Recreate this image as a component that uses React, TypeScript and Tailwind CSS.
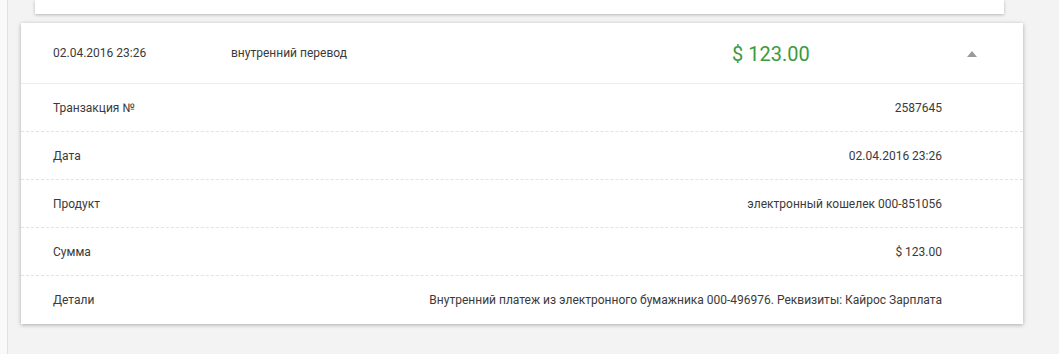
import React from "react";

const rows: [string, string][] = [
  ["Транзакция №", "2587645"],
  ["Дата", "02.04.2016 23:26"],
  ["Продукт", "электронный кошелек 000-851056"],
  ["Сумма", "$ 123.00"],
  ["Детали", "Внутренний платеж из электронного бумажника 000-496976. Реквизиты: Кайрос Зарплата"],
];

export default function App() {
  return (
    <div
      className="w-[1059px] h-[354px] bg-[#f3f3f3] flex overflow-hidden text-[12px] text-[#3a3a3a]"
      style={{ fontFamily: "Roboto, 'Liberation Sans', sans-serif" }}
    >
      <div className="w-[8px] shrink-0 bg-[#f9f9f9] border-r border-[#e2e2e2]" />
      <div className="flex-1 flex flex-col pl-[12px]">
        <div className="ml-[15px] w-[969px] h-[14px] bg-white shadow-[0_1px_3px_rgba(0,0,0,0.25)]" />
        <div className="mt-[9px] ml-[1px] w-[1002px] bg-white shadow-[0_1px_4px_rgba(0,0,0,0.3)] flex flex-col">
          <div className="h-[61px] flex items-center border-b border-[#ececec] pl-[32px]">
            <div className="w-[178px]">02.04.2016 23:26</div>
            <div className="w-[501px]">внутренний перевод</div>
            <div className="text-[20px] text-[#3d9a3d] w-[235px] mt-[2px]">$ 123.00</div>
            <svg width="10" height="6" viewBox="0 0 10 6" className="mt-[2px]">
              <polygon points="0,6 10,6 5,0" fill="#9a9a9a" />
            </svg>
          </div>
          {rows.map(([k, v], i) => (
            <div
              key={k}
              className={
                "h-[48px] flex items-center justify-between pl-[32px] pr-[81px]" +
                (i < rows.length - 1 ? " border-b border-dashed border-[#e3e3e3]" : "")
              }
            >
              <span>{k}</span>
              <span>{v}</span>
            </div>
          ))}
        </div>
      </div>
    </div>
  );
}
